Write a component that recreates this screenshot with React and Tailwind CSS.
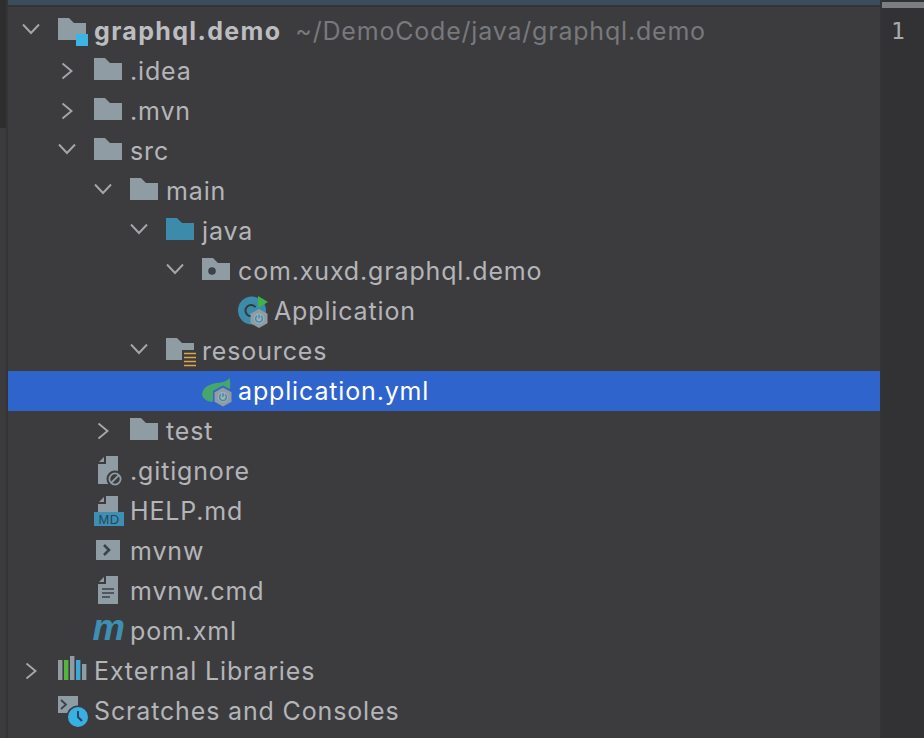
import React from "react";

const G = "#8f9ca3";
const B = "#3e8db0";
const D = "#3c3c3f";
const folderPath = "M0 2H11L16 7H28V24H0Z";

const Box = ({ children }) => (
  <svg width="30" height="30" viewBox="0 0 30 30" className="shrink-0 overflow-visible">{children}</svg>
);

const Hex = ({ cx, cy, hole }) => (
  <g>
    <polygon points={`${cx},${cy - 9.5} ${cx + 8.5},${cy - 4.8} ${cx + 8.5},${cy + 4.8} ${cx},${cy + 9.5} ${cx - 8.5},${cy + 4.8} ${cx - 8.5},${cy - 4.8}`} fill={G} />
    <circle cx={cx} cy={cy} r="5.2" fill={hole} />
    <path d={`M${cx - 2} ${cy - 2.6}A3.4 3.4 0 1 0 ${cx + 2} ${cy - 2.6}`} fill="none" stroke={B} strokeWidth="1.5" />
    <path d={`M${cx} ${cy - 4}V${cy}`} stroke={B} strokeWidth="1.5" />
  </g>
);

const FileShape = ({ y = 0, h = 28 }) => (
  <g>
    <path d={`M12 ${y}H24V${y + h}H4V${y + 8}H12Z`} fill={G} />
    <path d={`M10 ${y + 1}V${y + 6}H5Z`} fill={G} />
  </g>
);

const icons = {
  module: (
    <Box>
      <path d={folderPath} fill={G} />
      <rect x="18" y="18" width="12" height="12" fill="#3cb4e4" />
    </Box>
  ),
  folder: <Box><path d={folderPath} fill={G} /></Box>,
  source: <Box><path d={folderPath} fill="#3d8bab" /></Box>,
  pkg: (
    <Box>
      <path d={folderPath} fill={G} />
      <circle cx="10" cy="15" r="3.8" fill="#3d4149" />
    </Box>
  ),
  app: (
    <Box>
      <circle cx="14" cy="14.5" r="14" fill="#3d8bab" />
      <path d="M17.5 11.2A5.6 5.6 0 1 0 17.5 18" fill="none" stroke="#35393f" strokeWidth="2" />
      <path d="M20 0L30 6L20 12Z" fill="#3fb24c" />
      <Hex cx={21} cy={22.5} hole="#a3aeb5" />
    </Box>
  ),
  res: (
    <Box>
      <path d={folderPath} fill={G} />
      <rect x="16" y="14" width="15" height="17" fill={D} />
      <path d="M18 17.5H30M18 21.5H30M18 25.5H30M18 29.5H30" stroke="#dca548" strokeWidth="1.7" />
    </Box>
  ),
  yml: (
    <Box>
      <path d="M0 19C0 11 9 7.5 15 7C21 6.5 25 5 27.5 2C29.5 10 28 18 22 22C16 27 3 28 0 19Z" fill="#46a66b" />
      <polygon points="21,9.5 31,15 31,27 21,32.5 11,27 11,15" fill="#2e64cc" />
      <Hex cx={21} cy={21} hole="#a3aeb5" />
    </Box>
  ),
  ignore: (
    <Box>
      <FileShape />
      <circle cx="21" cy="23" r="8.5" fill={D} />
      <circle cx="21" cy="23" r="5.6" fill="none" stroke={G} strokeWidth="1.8" />
      <path d="M17 27L25 19" stroke={G} strokeWidth="1.8" />
    </Box>
  ),
  md: (
    <Box>
      <FileShape h={18} />
      <rect x="0" y="16" width="30" height="14" fill="#3d8fb3" />
      <text x="15" y="28" textAnchor="middle" fontSize="13" fontFamily="Liberation Sans, sans-serif" letterSpacing="0.5" fill="#27465a">MD</text>
    </Box>
  ),
  shell: (
    <Box>
      <rect x="2" y="4" width="24" height="20" fill={G} />
      <path d="M10 9L15 14L10 19" fill="none" stroke="#3d4149" strokeWidth="2.6" />
    </Box>
  ),
  text: (
    <Box>
      <FileShape />
      <path d="M8 13H20M8 17H20M8 21H16" stroke="#3d4149" strokeWidth="1.5" />
    </Box>
  ),
  maven: (
    <Box>
      <text x="-1.5" y="24" fontSize="36.5" fontWeight="700" fontStyle="italic" fontFamily="Liberation Sans, sans-serif" fill="#3d8fb3">m</text>
    </Box>
  ),
  libs: (
    <Box>
      <rect x="0" y="4" width="4.4" height="20" fill={G} />
      <rect x="6" y="4" width="4.4" height="20" fill="#55b340" />
      <rect x="12" y="0" width="4.4" height="24" fill={G} />
      <rect x="18" y="4" width="4.4" height="20" fill="#3ea9d6" />
      <rect x="24" y="8" width="4.4" height="16" fill={G} />
    </Box>
  ),
  scratch: (
    <Box>
      <rect x="0" y="0" width="20" height="17" fill={G} />
      <path d="M3 4L8 8.5L3 13" fill="none" stroke="#3d4149" strokeWidth="1.8" />
      <circle cx="20" cy="21" r="11.5" fill={D} />
      <circle cx="20" cy="21" r="10" fill="#39b0e2" />
      <path d="M20 15V21L24 25" fill="none" stroke="#27465a" strokeWidth="2" />
    </Box>
  ),
};

const rows = [
  { pl: "pl-[15px]", c: "down", i: "module", t: "graphql.demo", bold: true, sub: "~/DemoCode/java/graphql.demo" },
  { pl: "pl-[51px]", c: "right", i: "folder", t: ".idea" },
  { pl: "pl-[51px]", c: "right", i: "folder", t: ".mvn" },
  { pl: "pl-[51px]", c: "down", i: "folder", t: "src" },
  { pl: "pl-[87px]", c: "down", i: "folder", t: "main" },
  { pl: "pl-[123px]", c: "down", i: "source", t: "java" },
  { pl: "pl-[159px]", c: "down", i: "pkg", t: "com.xuxd.graphql.demo" },
  { pl: "pl-[195px]", i: "app", t: "Application" },
  { pl: "pl-[123px]", c: "down", i: "res", t: "resources" },
  { pl: "pl-[159px]", i: "yml", t: "application.yml", selected: true },
  { pl: "pl-[87px]", c: "right", i: "folder", t: "test" },
  { pl: "pl-[51px]", i: "ignore", t: ".gitignore" },
  { pl: "pl-[51px]", i: "md", t: "HELP.md" },
  { pl: "pl-[51px]", i: "shell", t: "mvnw" },
  { pl: "pl-[51px]", i: "text", t: "mvnw.cmd" },
  { pl: "pl-[51px]", i: "maven", t: "pom.xml" },
  { pl: "pl-[15px]", c: "right", i: "libs", t: "External Libraries" },
  { pl: "pl-[15px]", i: "scratch", t: "Scratches and Consoles" },
];

const Chevron = ({ dir }) => (
  <svg width="16" height="16" viewBox="0 0 16 16" className="shrink-0 overflow-visible">
    <path
      d={dir === "down" ? "M0 1.5L8 10L16 1.5" : "M3.5 0.5L12.5 8L3.5 15.5"}
      fill="none"
      stroke="#a4a6a9"
      strokeWidth="1.9"
    />
  </svg>
);

export default function App() {
  return (
    <div className="flex h-[738px] w-[924px] overflow-hidden bg-[#3c3c3f] font-['Inter',sans-serif] text-[25px] leading-[40px] tracking-[0.85px] text-[#b4b5b8]">
      <div className="flex w-2 shrink-0 flex-col border-r-2 border-[#343436]">
        <div className="h-[128px] bg-[#2e2e2f]" />
        <div className="flex-1 bg-[#3b3b3d]" />
      </div>
      <div className="flex min-w-0 flex-1 flex-col">
        <div className="h-[7px] shrink-0 border-b-2 border-[#333436] bg-[#3b4c5c]" />
        <div className="pt-1">
          {rows.map((r) => (
            <div key={r.t} className={`flex h-10 items-center whitespace-nowrap ${r.pl} ${r.selected ? "bg-[#2e64cc] text-white" : ""}`}>
              <div className="flex w-[16px] shrink-0 justify-center">{r.c ? <Chevron dir={r.c} /> : null}</div>
              <div className="ml-[19px] flex w-[36px] shrink-0 justify-start">{icons[r.i]}</div>
              <span className={r.bold ? "font-bold tracking-[1.35px] text-[#bcbdc0]" : ""}>{r.t}</span>
              {r.sub ? <span className="ml-[14px] tracking-[0.8px] text-[#77797c]">{r.sub}</span> : null}
            </div>
          ))}
        </div>
      </div>
      <div className="flex w-[44px] shrink-0 flex-col border-l-2 border-[#333436] bg-[#323234]">
        <div className="mt-[2px] h-[6px] bg-[#7c7f81]" />
        <div className="pt-[3px] pl-[9px] font-['DejaVu_Sans_Mono',monospace] text-[23px] tracking-normal text-[#a8a9ab]">1</div>
      </div>
    </div>
  );
}
